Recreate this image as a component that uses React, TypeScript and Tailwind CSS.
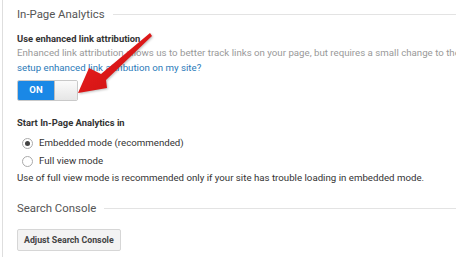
import React from "react";

export default function App() {
  return (
    <div
      className="relative w-[456px] h-[257px] overflow-hidden bg-white"
      style={{ fontFamily: "Roboto, 'Liberation Sans', sans-serif" }}
    >
      <div className="ml-[2px] h-full border-l border-[#dedede] pl-[14px] pt-[5px]">
        <div className="flex items-center">
          <span className="text-[11.4px] leading-[18px] text-[#555]">In-Page Analytics</span>
          <div className="ml-[8px] h-px flex-1 bg-[#e3e3e3]" />
        </div>

        <div className="mt-[9px] text-[9.4px] font-bold leading-[14px] text-[#333]">
          Use enhanced link attribution
        </div>
        <div className="whitespace-nowrap text-[9.7px] leading-[14px] text-[#999]">
          Enhanced link attribution allows us to better track links on your page, but requires a small change to the tracking code.
        </div>
        <div className="mt-[1px] text-[9.7px] leading-[14px] text-[#2a7ab9]">
          setup enhanced link attribution on my site?
        </div>

        <div className="mt-[5px] flex h-[21px] w-[61px] overflow-hidden rounded-[2px] border border-[#c9c9c9]">
          <div className="flex w-[36px] items-center justify-center bg-[#1a88e6] text-[9.5px] font-bold text-white">
            ON
          </div>
          <div className="flex-1 border-l border-[#bdbdbd] bg-gradient-to-b from-[#fbfbfb] to-[#e6e6e6]" />
        </div>

        <div className="mt-[15px] text-[9.4px] font-bold leading-[14px] text-[#333]">
          Start In-Page Analytics in
        </div>
        <div className="mt-[6px] flex h-[14px] items-center pl-[5px]">
          <span className="flex h-[11px] w-[11px] items-center justify-center rounded-full border border-[#aaa]">
            <span className="h-[5px] w-[5px] rounded-full bg-[#444]" />
          </span>
          <span className="ml-[6px] text-[9.7px] leading-[14px] text-[#333]">Embedded mode (recommended)</span>
        </div>
        <div className="mt-[4px] flex h-[14px] items-center pl-[5px]">
          <span className="h-[11px] w-[11px] rounded-full border border-[#aaa]" />
          <span className="ml-[6px] text-[9.7px] leading-[14px] text-[#333]">Full view mode</span>
        </div>
        <div className="mt-[3px] whitespace-nowrap text-[9.7px] leading-[14px] text-[#333]">
          Use of full view mode is recommended only if your site has trouble loading in embedded mode.
        </div>

        <div className="mt-[14px] flex items-center">
          <span className="text-[11.4px] leading-[18px] text-[#555]">Search Console</span>
          <div className="ml-[8px] h-px flex-1 bg-[#e3e3e3]" />
        </div>

        <button className="mt-[12px] rounded-[2px] border border-[#d6d6d6] bg-[#f3f3f3] px-[6px] py-[4px] text-[8.8px] font-bold leading-[12px] text-[#444]">
          Adjust Search Console
        </button>
      </div>

      <svg
        className="absolute left-0 top-0"
        width="456"
        height="257"
        viewBox="0 0 456 257"
        style={{ filter: "drop-shadow(1px 1px 1px rgba(0,0,0,0.25))" }}
      >
        <defs>
          <linearGradient id="ag" x1="0" y1="0" x2="1" y2="1">
            <stop offset="0" stopColor="#f02020" />
            <stop offset="1" stopColor="#c81010" />
          </linearGradient>
        </defs>
        <polygon
          points="78,93 89,68 101,74 150,33 152,36 106,80 107,88"
          fill="url(#ag)"
        />
      </svg>
    </div>
  );
}
